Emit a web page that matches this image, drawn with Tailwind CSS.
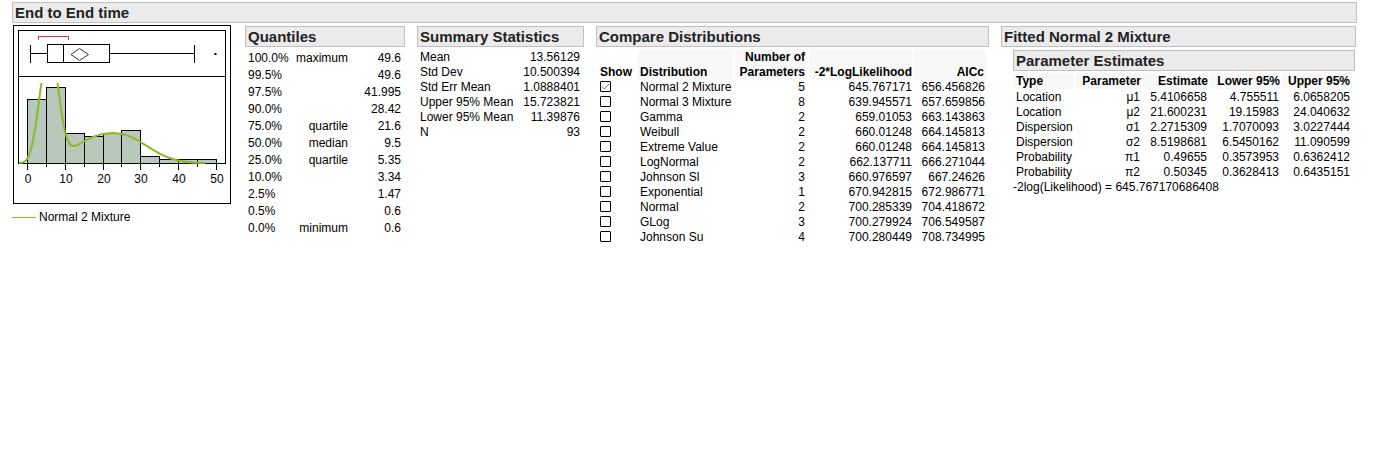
<!DOCTYPE html>
<html lang="en">
<head>
  <meta charset="UTF-8" />
  <meta name="viewport" content="width=device-width, initial-scale=1.0"/>
  <title>End to End time</title>
  <script src="https://cdn.jsdelivr.net/npm/@tailwindcss/browser@4"></script>
</head>
<body class="bg-white text-black text-[12px] leading-[15px] font-['Liberation_Sans',Arial,sans-serif] pt-[2px] pl-3 pr-[26px]">

  <h1 class="h-[21px] border border-[#c0c0c0] bg-[#ebebeb] px-[2px] text-[15px] leading-[20px] font-bold text-[#222]">End to End time</h1>

  <main class="mt-[3px] pr-px grid grid-cols-[221fr_160fr_167fr_393fr_355fr] gap-3 items-start">

    <!-- Histogram -->
    <figure class="-mt-px">
      <svg viewBox="12 25 221 180" class="block w-full" role="img" aria-label="Histogram with box plot">
        <g fill="none" stroke="#000" shape-rendering="crispEdges">
          <rect x="13.5" y="25.5" width="217" height="178"/>
          <rect x="18.5" y="30.5" width="207" height="133"/>
          <path d="M18 76.5H226"/>
          <!-- box plot -->
          <path d="M30.5 45V63M30 53.5H47M110 53.5H195M194.5 45V63"/>
          <rect x="47.5" y="44.5" width="62" height="18"/>
          <path d="M63.5 44V63"/>
          <path d="M38.5 40V36.5H68.5V40" stroke="#e8304a"/>
        </g>
        <path d="M71 54.5L79.5 48.5L88.5 54.5L79.5 60.5Z" fill="none" stroke="#333"/>
        <rect x="214.5" y="53" width="2" height="2"/>
        <!-- bars -->
        <g fill="#b8c8bb" stroke="#000" shape-rendering="crispEdges">
          <rect x="27.5" y="99.5" width="19" height="64"/>
          <rect x="46.5" y="87.5" width="19" height="76"/>
          <rect x="65.5" y="133.5" width="19" height="30"/>
          <rect x="84.5" y="136.5" width="19" height="27"/>
          <rect x="103.5" y="133.5" width="18" height="30"/>
          <rect x="121.5" y="130.5" width="19" height="33"/>
          <rect x="140.5" y="156.5" width="19" height="7"/>
          <rect x="159.5" y="159.5" width="19" height="4"/>
          <rect x="178.5" y="159.5" width="19" height="4"/>
          <rect x="197.5" y="159.5" width="19" height="4"/>
        </g>
        <path d="M27.5 163V170M65.5 163V170M103.5 163V170M140.5 163V170M178.5 163V170M216.5 163V170M46.5 163V167M84.5 163V167M121.5 163V167M159.5 163V167M197.5 163V167" stroke="#000" shape-rendering="crispEdges"/>
        <path d="M19 163C25 163 28 160 31 149C36 131 38 105 41.5 83M57.5 83C60 103 62 119 65 132C68 142 70 147 75 146C83 143 92 133.5 112 133C137 133 146 150 171 158.500C181 162 190 163 205 163" fill="none" stroke="#8fb92c" stroke-width="2"/>
        <g font-size="12" text-anchor="middle">
          <text x="28" y="183">0</text>
          <text x="66" y="183">10</text>
          <text x="104" y="183">20</text>
          <text x="141" y="183">30</text>
          <text x="179" y="183">40</text>
          <text x="217" y="183">50</text>
        </g>
      </svg>
      <figcaption class="mt-[5px] flex items-center gap-[3px]">
        <span class="w-6 h-px bg-[#8fb92c]"></span>Normal 2 Mixture
      </figcaption>
    </figure>

    <!-- Quantiles -->
    <section>
      <h2 class="h-[21px] border border-[#c0c0c0] bg-[#ebebeb] px-[2px] text-[15px] leading-[20px] font-bold text-[#222]">Quantiles</h2>
      <table class="mt-[3px] w-full leading-[17px]">
        <tbody class="[&_td]:p-0 [&_td:first-child]:pl-[3px] [&_td:nth-child(2)]:text-right [&_td:last-child]:pr-1 [&_td:last-child]:text-right">
          <tr><td class="w-[46px]">100.0%</td><td class="w-[57px]">maximum</td><td>49.6</td></tr>
          <tr><td>99.5%</td><td></td><td>49.6</td></tr>
          <tr><td>97.5%</td><td></td><td>41.995</td></tr>
          <tr><td>90.0%</td><td></td><td>28.42</td></tr>
          <tr><td>75.0%</td><td>quartile</td><td>21.6</td></tr>
          <tr><td>50.0%</td><td>median</td><td>9.5</td></tr>
          <tr><td>25.0%</td><td>quartile</td><td>5.35</td></tr>
          <tr><td>10.0%</td><td></td><td>3.34</td></tr>
          <tr><td>2.5%</td><td></td><td>1.47</td></tr>
          <tr><td>0.5%</td><td></td><td>0.6</td></tr>
          <tr><td>0.0%</td><td>minimum</td><td>0.6</td></tr>
        </tbody>
      </table>
    </section>

    <!-- Summary Statistics -->
    <section>
      <h2 class="h-[21px] border border-[#c0c0c0] bg-[#ebebeb] px-[2px] text-[15px] leading-[20px] font-bold text-[#222]">Summary Statistics</h2>
      <table class="mt-[3px] w-full whitespace-nowrap">
        <tbody class="[&_th]:pl-[3px] [&_th]:text-left [&_th]:font-normal [&_td]:pr-1 [&_td]:text-right">
          <tr><th scope="row">Mean</th><td>13.56129</td></tr>
          <tr><th scope="row">Std Dev</th><td>10.500394</td></tr>
          <tr><th scope="row">Std Err Mean</th><td>1.0888401</td></tr>
          <tr><th scope="row">Upper 95% Mean</th><td>15.723821</td></tr>
          <tr><th scope="row">Lower 95% Mean</th><td>11.39876</td></tr>
          <tr><th scope="row">N</th><td>93</td></tr>
        </tbody>
      </table>
    </section>

    <!-- Compare Distributions -->
    <section>
      <h2 class="h-[21px] border border-[#c0c0c0] bg-[#ebebeb] px-[2px] text-[15px] leading-[20px] font-bold text-[#222]">Compare Distributions</h2>
      <table class="mt-[2px] w-full table-fixed whitespace-nowrap">
        <colgroup>
          <col class="w-[42px]"><col class="w-[97px]"><col class="w-[74px]"><col class="w-[105px]"><col class="w-[75px]">
        </colgroup>
        <thead class="align-bottom [&_th]:p-0 [&_th]:font-bold [&_div]:h-[31px]">
          <tr>
            <th scope="col"><div class="pl-1 pt-[16px] text-left">Show</div></th>
            <th scope="col"><div class="mr-[2px] pl-[2px] pt-[16px] text-left bg-[#f8f8f8]">Distribution</div></th>
            <th scope="col"><div class="mr-[2px] pr-[2px] pt-px text-right bg-[#f8f8f8]">Number of<br>Parameters</div></th>
            <th scope="col"><div class="mr-[2px] pt-[16px] flex justify-end bg-[#f8f8f8]">-2*LogLikelihood</div></th>
            <th scope="col"><div class="mr-[3px] pr-[2px] pt-[16px] text-right bg-[#f8f8f8]">AICc</div></th>
          </tr>
        </thead>
        <tbody id="distributions"></tbody>
      </table>
    </section>

    <!-- Fitted Normal 2 Mixture -->
    <section>
      <h2 class="h-[21px] border border-[#c0c0c0] bg-[#ebebeb] px-[2px] text-[15px] leading-[20px] font-bold text-[#222]">Fitted Normal 2 Mixture</h2>
      <div class="mt-[3px] ml-3 mr-px">
        <h3 class="h-[21px] border border-[#c0c0c0] bg-[#ebebeb] px-[2px] text-[15px] leading-[20px] font-bold text-[#222]">Parameter Estimates</h3>
        <table class="mt-[2px] w-full table-fixed whitespace-nowrap">
          <colgroup>
            <col class="w-[63px]"><col class="w-[67px]"><col class="w-[67px]"><col class="w-[72px]"><col class="w-[73px]">
          </colgroup>
          <thead class="[&_th]:p-0 [&_th]:pb-px [&_th]:font-bold [&_div]:pt-px [&_div]:bg-[#f8f8f8] [&_div]:text-right">
            <tr>
              <th scope="col"><div class="mr-[2px] pl-[3px] text-left!">Type</div></th>
              <th scope="col"><div class="mr-[2px]">Parameter</div></th>
              <th scope="col"><div class="mr-[2px]">Estimate</div></th>
              <th scope="col"><div class="mr-[2px]">Lower 95%</div></th>
              <th scope="col"><div class="mr-[3px] pr-[2px]">Upper 95%</div></th>
            </tr>
          </thead>
          <tbody class="[&_td]:p-0 [&_td]:pr-[3px] [&_td]:text-right [&_td:first-child]:pl-[3px] [&_td:first-child]:text-left [&_td:last-child]:pr-[5px]">
            <tr><td>Location</td><td>μ1</td><td>5.4106658</td><td>4.755511</td><td>6.0658205</td></tr>
            <tr><td>Location</td><td>μ2</td><td>21.600231</td><td>19.15983</td><td>24.040632</td></tr>
            <tr><td>Dispersion</td><td>σ1</td><td>2.2715309</td><td>1.7070093</td><td>3.0227444</td></tr>
            <tr><td>Dispersion</td><td>σ2</td><td>8.5198681</td><td>6.5450162</td><td>11.090599</td></tr>
            <tr><td>Probability</td><td>π1</td><td>0.49655</td><td>0.3573953</td><td>0.6362412</td></tr>
            <tr><td>Probability</td><td>π2</td><td>0.50345</td><td>0.3628413</td><td>0.6435151</td></tr>
          </tbody>
        </table>
        <p>-2log(Likelihood) = 645.767170686408</p>
      </div>
    </section>

  </main>

  <script>
    const distributions = [
      ['Normal 2 Mixture', 5, '645.767171', '656.456826'],
      ['Normal 3 Mixture', 8, '639.945571', '657.659856'],
      ['Gamma', 2, '659.01053', '663.143863'],
      ['Weibull', 2, '660.01248', '664.145813'],
      ['Extreme Value', 2, '660.01248', '664.145813'],
      ['LogNormal', 2, '662.137711', '666.271044'],
      ['Johnson Sl', 3, '660.976597', '667.24626'],
      ['Exponential', 1, '670.942815', '672.986771'],
      ['Normal', 2, '700.285339', '704.418672'],
      ['GLog', 3, '700.279924', '706.549587'],
      ['Johnson Su', 4, '700.280449', '708.734995']
    ];

    document.getElementById('distributions').innerHTML = distributions.map((d, i) => `
      <tr>
        <td class="p-0 pl-1"><span class="relative flex h-[15px] w-[11px] items-start pt-px">
          <input type="checkbox" id="dist-${i}" class="peer block size-[11px] appearance-none rounded-[1px] border border-black bg-white" ${i === 0 ? 'checked' : ''}>
          <svg viewBox="0 0 11 11" class="pointer-events-none absolute left-0 top-px hidden size-[11px] peer-checked:block" fill="none" stroke="#777"><path d="M2 5.5L4.5 8L9 3"/></svg>
        </span></td>
        <td class="p-0 pl-[2px]"><label for="dist-${i}">${d[0]}</label></td>
        <td class="p-0 pr-1 text-right">${d[1]}</td>
        <td class="p-0 pr-[2px] text-right">${d[2]}</td>
        <td class="p-0 pr-1 text-right">${d[3]}</td>
      </tr>
    `).join('');
  </script>

</body>
</html>
